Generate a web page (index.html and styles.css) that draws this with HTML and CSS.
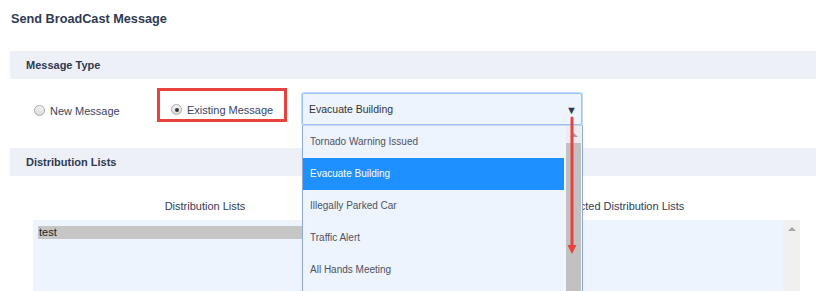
FILE: index.html
```html
<!DOCTYPE html>
<html>
<head>
<meta charset="utf-8">
<link rel="stylesheet" href="styles.css">
</head>
<body>
<div class="page">
  <h1 class="title">Send BroadCast Message</h1>

  <div class="band">Message Type</div>

  <div class="type-row">
    <label class="opt">
      <span class="radio"></span>
      <span class="opt-text">New Message</span>
    </label>
    <label class="opt opt-marked">
      <span class="radio radio-on"></span>
      <span class="opt-text">Existing Message</span>
    </label>
    <div class="select">
      <div class="select-box">
        <span class="select-value">Evacuate Building</span>
        <span class="select-arrow">&#9660;</span>
      </div>
      <div class="menu">
        <div class="menu-items">
          <div class="menu-item">Tornado Warning Issued</div>
          <div class="menu-item menu-item-active">Evacuate Building</div>
          <div class="menu-item">Illegally Parked Car</div>
          <div class="menu-item">Traffic Alert</div>
          <div class="menu-item">All Hands Meeting</div>
        </div>
        <div class="menu-scroll">
          <div class="menu-scroll-btn"><span class="tri-up"></span></div>
          <div class="menu-scroll-thumb"></div>
        </div>
      </div>
      <svg class="red-arrow" width="14" height="142" viewBox="0 0 14 142">
        <line x1="6" y1="2" x2="6" y2="132" stroke="#e8423f" stroke-width="3" stroke-linecap="round"/>
        <path d="M1.5 129 L10.5 129 L6 138 Z" fill="#e8423f"/>
      </svg>
    </div>
  </div>

  <div class="band">Distribution Lists</div>

  <div class="lists">
    <div class="list-col">
      <div class="list-label">Distribution Lists</div>
      <div class="list-box">
        <div class="list-row">test</div>
      </div>
    </div>
    <div class="list-col">
      <div class="list-label">Selected Distribution Lists</div>
      <div class="list-box list-box-scroll">
        <div class="list-inner"></div>
        <div class="list-scroll"><span class="tri-up tri-up-light"></span></div>
      </div>
    </div>
  </div>
</div>
</body>
</html>
```

FILE: styles.css
```css
* { box-sizing: border-box; }

html, body {
  margin: 0;
  padding: 0;
  background: #ffffff;
  overflow: hidden;
}

body {
  font-family: "Liberation Sans", Arial, sans-serif;
  color: #333c55;
}

.page {
  padding-left: 10px;
  width: 816px;
  height: 291px;
  overflow: hidden;
}

.title {
  margin: 0 0 24px 1px;
  padding-top: 12px;
  font-size: 12.7px;
  line-height: 15px;
  font-weight: bold;
  color: #2f3a52;
}

.band {
  height: 28px;
  line-height: 28px;
  padding-left: 16px;
  background: #edf0f7;
  font-size: 11px;
  font-weight: bold;
  color: #2f3a52;
}

.type-row {
  display: flex;
  align-items: flex-start;
  height: 69px;
  padding: 9px 0 0 24px;
}

.opt {
  display: flex;
  align-items: center;
  height: 34px;
  font-size: 11px;
  color: #3a4560;
}

.opt-text { margin-left: 5px; }

.opt:first-child { width: 123px; padding-top: 11px; }

.opt-marked {
  width: 130px;
  border: 3px solid #e8423f;
  padding: 9px 0 0 11px;
}

.radio {
  width: 11px;
  height: 11px;
  border-radius: 50%;
  border: 1px solid #a9a9a9;
  background: linear-gradient(#f4f4f4, #dcdcdc);
  flex: none;
  position: relative;
}

.radio-on::after {
  content: "";
  position: absolute;
  left: 2.5px;
  top: 2.5px;
  width: 4px;
  height: 4px;
  border-radius: 50%;
  background: #3a3a3a;
}

.select {
  position: relative;
  margin: 5px 0 0 15px;
  width: 280px;
}

.select-box {
  display: flex;
  align-items: center;
  justify-content: space-between;
  height: 32px;
  padding: 0 4px 0 6px;
  background: #edf4fe;
  border: 1px solid #9cc3f5;
  border-radius: 2px;
  box-shadow: 0 0 0 1px #c3dbfb;
  font-size: 10.5px;
  color: #333;
}

.select-arrow {
  font-size: 11px;
  color: #2f3a52;
  margin-top: 1px;
}

.menu {
  position: absolute;
  left: 0;
  top: 32px;
  width: 281px;
  height: 180px;
  display: flex;
  background: #eef4fd;
  border-left: 1px solid #8ea8d8;
  border-right: 1px solid #8ea8d8;
  border-top: 1px solid #c9d5ea;
  z-index: 2;
}

.menu-items {
  flex: 1;
  padding-right: 2px;
}

.menu-item {
  height: 32px;
  line-height: 32px;
  padding-left: 7px;
  font-size: 10px;
  color: #4d5262;
}

.menu-item-active {
  background: #1e90ff;
  color: #ffffff;
}

.menu-scroll {
  width: 15px;
  margin-right: 1px;
  display: flex;
  flex-direction: column;
  background: #f0f0f0;
}

.menu-scroll-btn {
  height: 17px;
  display: flex;
  justify-content: center;
  padding-top: 7px;
  background: #ececec;
}

.menu-scroll-thumb {
  flex: 1;
  background: #c1c1c1;
}

.tri-up {
  width: 0;
  height: 0;
  border-left: 4px solid transparent;
  border-right: 4px solid transparent;
  border-bottom: 4px solid #a3a3a3;
}

.red-arrow {
  position: absolute;
  left: 264px;
  top: 23px;
  z-index: 3;
}

.lists {
  display: grid;
  grid-template-columns: 344px 358px;
  column-gap: 65px;
  padding-left: 23px;
}

.list-label {
  margin-top: 23px;
  height: 14px;
  line-height: 14px;
  text-align: center;
  font-size: 11px;
  color: #333c55;
}

.list-box {
  margin-top: 7px;
  height: 100px;
  background: #eef4fd;
  border-radius: 2px;
  padding: 6px 0 0 5px;
}

.list-row {
  height: 13px;
  line-height: 13px;
  background: #c6c6c6;
  font-size: 11px;
  color: #222;
  padding-left: 1px;
}

.list-box-scroll {
  display: flex;
  padding: 0;
}

.list-inner { flex: 1; }

.list-scroll {
  width: 17px;
  background: #f0f0f0;
  display: flex;
  justify-content: center;
  padding-top: 7px;
}

.tri-up-light { border-bottom-color: #a8a8a8; }
```
